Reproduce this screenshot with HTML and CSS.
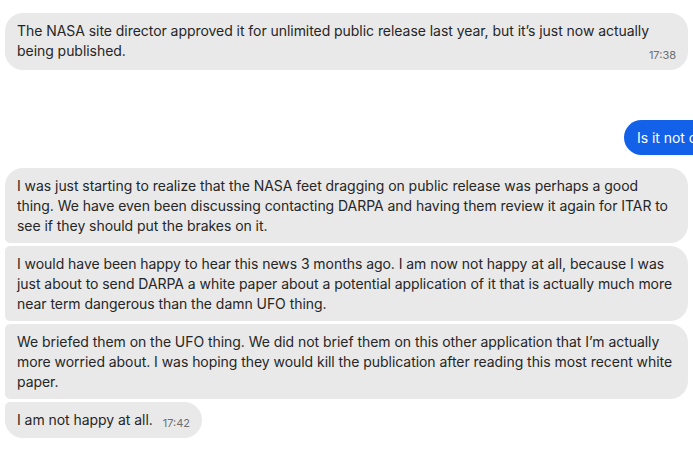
FILE: index.html
```html
<!DOCTYPE html>
<html lang="en">
<head>
    <meta charset="UTF-8">
    <meta name="viewport" content="width=device-width, initial-scale=1.0">
    <title>Chat</title>
    <link rel="stylesheet" href="styles.css">
</head>
<body>
    <div class="chat">
        <div class="msg in single">
            The NASA site director approved it for unlimited public release last year, but it’s just now actually being published.<span class="time float">17:38</span>
        </div>

        <div class="msg out">Is it not classified?</div>

        <div class="group">
            <div class="msg in first">
                I was just starting to realize that the NASA feet dragging on public release was perhaps a good thing. We have even been discussing contacting DARPA and having them review it again for ITAR to see if they should put the brakes on it.
            </div>
            <div class="msg in middle">
                I would have been happy to hear this news 3 months ago. I am now not happy at all, because I was just about to send DARPA a white paper about a potential application of it that is actually much more near term dangerous than the damn UFO thing.
            </div>
            <div class="msg in middle">
                We briefed them on the UFO thing. We did not brief them on this other application that I’m actually more worried about. I was hoping they would kill the publication after reading this most recent white paper.
            </div>
            <div class="msg in last short">
                I am not happy at all.<span class="time">17:42</span>
            </div>
        </div>
    </div>
</body>
</html>
```

FILE: styles.css
```css
/* Fil de discussion */
html, body {
    margin: 0;
    padding: 0;
    overflow: hidden;
    background-color: #fff;
}

body {
    font-family: 'Inter', 'Noto Sans', sans-serif;
    font-size: 14px;
    line-height: 20px;
    letter-spacing: -0.05px;
    color: #262626;
}

.chat {
    width: 776px;
    padding: 13px 5px 0 5px;
    box-sizing: border-box;
    display: flex;
    flex-direction: column;
}

.group {
    display: flex;
    flex-direction: column;
    gap: 3px;
}

.msg {
    max-width: 683px;
    padding: 7.5px 12px;
    box-sizing: border-box;
    border-radius: 18px;
}

.msg.in {
    align-self: flex-start;
    background-color: #e9e9e9;
}

.msg.single {
    margin-bottom: 50px;
}

.msg.out {
    align-self: flex-end;
    background-color: #1360e9;
    color: #fff;
    padding: 7.5px 13px;
    white-space: nowrap;
    margin-bottom: 13px;
}

.msg.first {
    border-bottom-left-radius: 5px;
}

.msg.middle {
    border-top-left-radius: 5px;
    border-bottom-left-radius: 5px;
}

.msg.last {
    border-top-left-radius: 5px;
}

.time {
    font-size: 11px;
    letter-spacing: 0;
    color: #6e6e6e;
    margin-left: 10px;
    position: relative;
    top: 2px;
}

.time.float {
    float: right;
    margin-top: 2px;
}
```
